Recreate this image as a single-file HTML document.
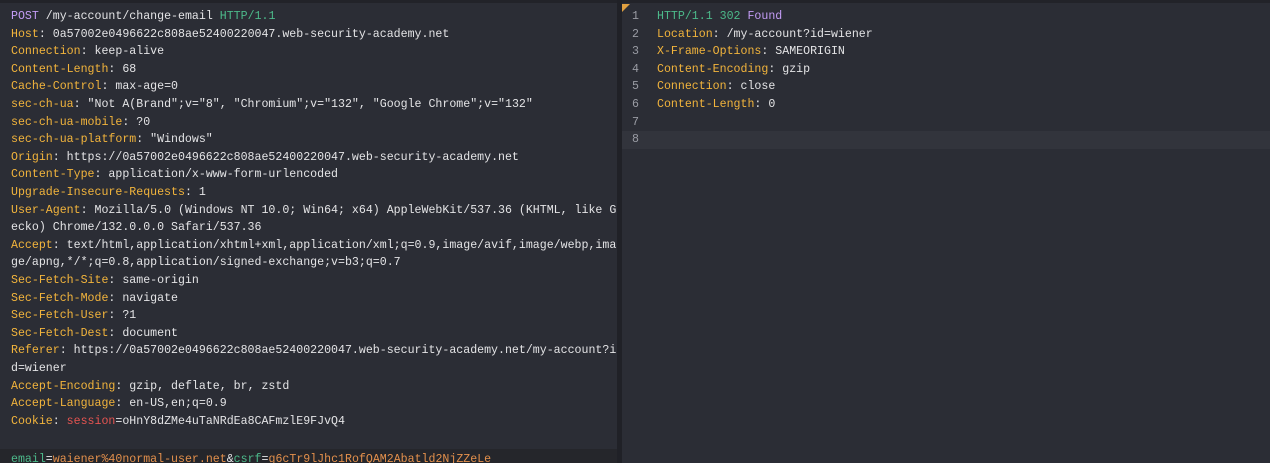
<!DOCTYPE html>
<html><head><meta charset="utf-8"><style>
html,body{margin:0;padding:0;width:1270px;height:463px;overflow:hidden;background:#2b2d35;}
body{font-family:"Liberation Mono",monospace;font-size:11.6px;color:#e4e4e6;}
#top{position:absolute;left:0;top:0;width:1270px;height:3px;background:#222329;}
#left{position:absolute;left:0;top:3px;width:617px;height:460px;background:#2b2d35;overflow:hidden;}
#div{position:absolute;left:617px;top:0;width:5px;height:463px;background:#202127;}
#right{position:absolute;left:622px;top:3px;width:648px;height:460px;background:#2b2d35;}
.l{position:absolute;left:11px;white-space:pre;line-height:17.6px;}
.k{color:#f2b43c}.p{color:#c49cf6}.g{color:#4cb98a}.r{color:#e55451}.o{color:#e3904c}
#body{position:absolute;left:0;top:446px;width:617px;height:14px;background:#25262b;}
.n{position:absolute;left:10px;color:#9a9ca4;line-height:17.6px;}
.t{position:absolute;left:35px;white-space:pre;line-height:17.6px;}
#hl{position:absolute;left:0;top:128px;width:648px;height:18px;background:#32343c;}
#tri{position:absolute;left:0;top:1px;width:0;height:0;border-top:8px solid #e0a040;border-right:8px solid transparent;}
</style></head><body>
<div id="top"></div>
<div id="left">
<div id="body"></div>
<div class="l" style="top:5px"><span class="p">POST</span> /my-account/change-email <span class="g">HTTP/1.1</span></div>
<div class="l" style="top:22.6px"><span class="k">Host</span>: 0a57002e0496622c808ae52400220047.web-security-academy.net</div>
<div class="l" style="top:40.2px"><span class="k">Connection</span>: keep-alive</div>
<div class="l" style="top:57.8px"><span class="k">Content-Length</span>: 68</div>
<div class="l" style="top:75.4px"><span class="k">Cache-Control</span>: max-age=0</div>
<div class="l" style="top:93px"><span class="k">sec-ch-ua</span>: "Not A(Brand";v="8", "Chromium";v="132", "Google Chrome";v="132"</div>
<div class="l" style="top:110.6px"><span class="k">sec-ch-ua-mobile</span>: ?0</div>
<div class="l" style="top:128.2px"><span class="k">sec-ch-ua-platform</span>: "Windows"</div>
<div class="l" style="top:145.8px"><span class="k">Origin</span>: https://0a57002e0496622c808ae52400220047.web-security-academy.net</div>
<div class="l" style="top:163.4px"><span class="k">Content-Type</span>: application/x-www-form-urlencoded</div>
<div class="l" style="top:181px"><span class="k">Upgrade-Insecure-Requests</span>: 1</div>
<div class="l" style="top:198.6px"><span class="k">User-Agent</span>: Mozilla/5.0 (Windows NT 10.0; Win64; x64) AppleWebKit/537.36 (KHTML, like G</div>
<div class="l" style="top:216.2px">ecko) Chrome/132.0.0.0 Safari/537.36</div>
<div class="l" style="top:233.8px"><span class="k">Accept</span>: text/html,application/xhtml+xml,application/xml;q=0.9,image/avif,image/webp,ima</div>
<div class="l" style="top:251.4px">ge/apng,*/*;q=0.8,application/signed-exchange;v=b3;q=0.7</div>
<div class="l" style="top:269px"><span class="k">Sec-Fetch-Site</span>: same-origin</div>
<div class="l" style="top:286.6px"><span class="k">Sec-Fetch-Mode</span>: navigate</div>
<div class="l" style="top:304.2px"><span class="k">Sec-Fetch-User</span>: ?1</div>
<div class="l" style="top:321.8px"><span class="k">Sec-Fetch-Dest</span>: document</div>
<div class="l" style="top:339.4px"><span class="k">Referer</span>: https://0a57002e0496622c808ae52400220047.web-security-academy.net/my-account?i</div>
<div class="l" style="top:357px">d=wiener</div>
<div class="l" style="top:374.6px"><span class="k">Accept-Encoding</span>: gzip, deflate, br, zstd</div>
<div class="l" style="top:392.2px"><span class="k">Accept-Language</span>: en-US,en;q=0.9</div>
<div class="l" style="top:409.8px"><span class="k">Cookie</span>: <span class="r">session</span>=oHnY8dZMe4uTaNRdEa8CAFmzlE9FJvQ4</div>
<div class="l" style="top:448px"><span class="g">email</span>=<span class="o">waiener%40normal-user.net</span>&amp;<span class="g">csrf</span>=<span class="o">g6cTr9lJhc1RofQAM2Abatld2NjZZeLe</span></div>
</div>
<div id="div"></div>
<div id="right">
<div id="hl"></div>
<div id="tri"></div>
<div class="n" style="top:5px">1</div><div class="t" style="top:5px"><span class="g">HTTP/1.1 302</span> <span class="p">Found</span></div>
<div class="n" style="top:22.6px">2</div><div class="t" style="top:22.6px"><span class="k">Location</span>: /my-account?id=wiener</div>
<div class="n" style="top:40.2px">3</div><div class="t" style="top:40.2px"><span class="k">X-Frame-Options</span>: SAMEORIGIN</div>
<div class="n" style="top:57.8px">4</div><div class="t" style="top:57.8px"><span class="k">Content-Encoding</span>: gzip</div>
<div class="n" style="top:75.4px">5</div><div class="t" style="top:75.4px"><span class="k">Connection</span>: close</div>
<div class="n" style="top:93px">6</div><div class="t" style="top:93px"><span class="k">Content-Length</span>: 0</div>
<div class="n" style="top:110.6px">7</div>
<div class="n" style="top:128.2px">8</div>
</div>
</body></html>
